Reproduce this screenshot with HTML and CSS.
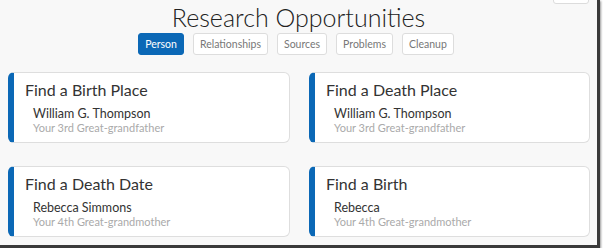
FILE: index.html
```html
<!DOCTYPE html>
<html lang="en">
<head>
    <meta charset="UTF-8">
    <meta name="viewport" content="width=device-width, initial-scale=1.0">
    <title>Research Opportunities</title>
    <link rel="stylesheet" href="styles.css">
</head>
<body>
    <div class="frame">
        <div class="topbar">
            <div class="corner-btn"></div>
        </div>
        <h1 class="title">Research Opportunities</h1>
        <nav class="tabs">
            <a class="tab active" href="#">Person</a>
            <a class="tab" href="#">Relationships</a>
            <a class="tab" href="#">Sources</a>
            <a class="tab" href="#">Problems</a>
            <a class="tab" href="#">Cleanup</a>
        </nav>
        <div class="cards">
            <div class="card">
                <h2 class="card-title">Find a Birth Place</h2>
                <div class="person-name">William G. Thompson</div>
                <div class="relation">Your 3rd Great-grandfather</div>
            </div>
            <div class="card">
                <h2 class="card-title">Find a Death Place</h2>
                <div class="person-name">William G. Thompson</div>
                <div class="relation">Your 3rd Great-grandfather</div>
            </div>
            <div class="card">
                <h2 class="card-title">Find a Death Date</h2>
                <div class="person-name">Rebecca Simmons</div>
                <div class="relation">Your 4th Great-grandmother</div>
            </div>
            <div class="card">
                <h2 class="card-title">Find a Birth</h2>
                <div class="person-name">Rebecca</div>
                <div class="relation">Your 4th Great-grandmother</div>
            </div>
        </div>
    </div>
</body>
</html>
```

FILE: styles.css
```css
body{
    margin: 0;
    background-color: #ffffff;
    font-family: Lato, "Liberation Sans", sans-serif;
}
.frame{
    width: 597px;
    height: 245px;
    background-color: #f8f8f8;
    border-right: 3px solid #3a3a3a;
    border-bottom: 3px solid #3a3a3a;
    box-shadow: 1px 1px 2px #999;
    overflow: hidden;
}
.topbar{
    display: flex;
    justify-content: flex-end;
    height: 0;
    padding-right: 8px;
}
.corner-btn{
    width: 34px;
    height: 20px;
    margin-top: -18px;
    background-color: #fff;
    border: 1px solid #dcdcdc;
    border-radius: 3px;
}
.title{
    margin: 0;
    padding-top: 1px;
    text-align: center;
    font-size: 25px;
    font-weight: 300;
    line-height: 32px;
    color: #222;
}
.tabs{
    display: flex;
    justify-content: center;
    gap: 9px;
    padding-right: 5px;
}
.tab{
    padding: 3px 6px;
    font-size: 10.5px;
    line-height: 14px;
    color: #777;
    background-color: #fff;
    border: 1px solid #ddd;
    border-radius: 3px;
    text-decoration: none;
}
.tab.active{
    color: #fff;
    background-color: #0b68b6;
    border-color: #0b68b6;
}
.cards{
    display: grid;
    grid-template-columns: 282px 281px;
    column-gap: 19px;
    row-gap: 23px;
    padding: 17px 7px 0 8px;
}
.card{
    box-sizing: border-box;
    height: 71px;
    padding: 7px 10px 0 11px;
    background-color: #fff;
    border: 1px solid #dedede;
    border-left: 6px solid #0b68b6;
    border-radius: 6px;
}
.card-title{
    margin: 0;
    font-size: 16px;
    font-weight: 400;
    line-height: 20px;
    color: #333;
}
.person-name{
    margin-top: 6px;
    padding-left: 8px;
    font-size: 12.5px;
    line-height: 15px;
    color: #333;
}
.relation{
    padding-left: 8px;
    font-size: 11px;
    line-height: 14px;
    color: #aaa;
}
```
